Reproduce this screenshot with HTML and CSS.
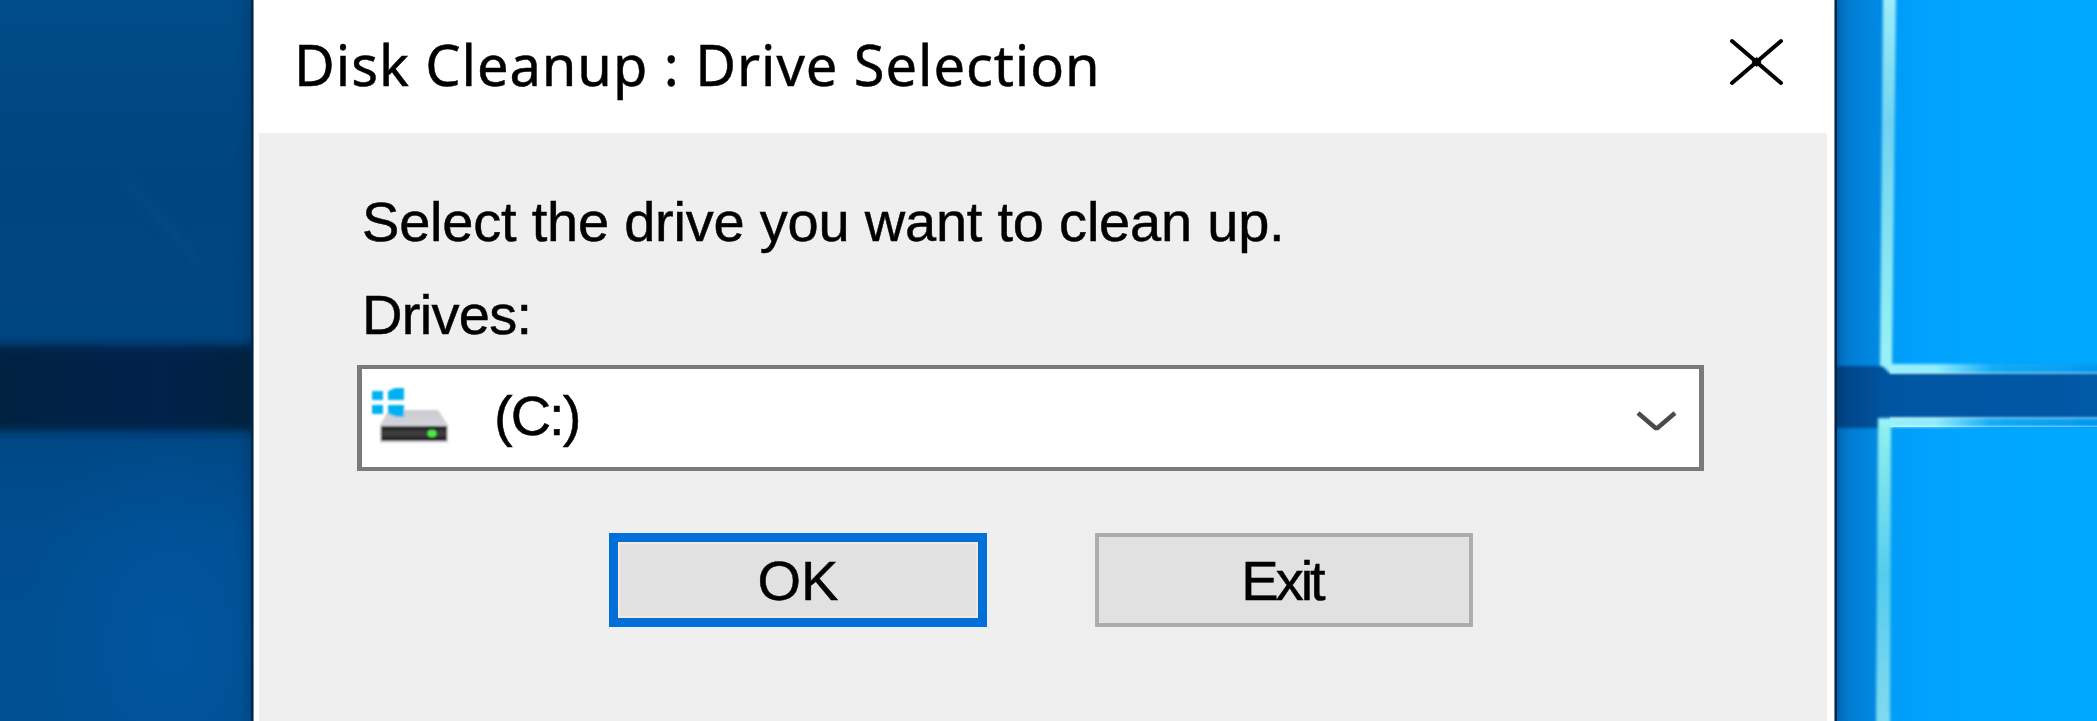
FILE: index.html
```html
<!DOCTYPE html>
<html lang="en">
<head>
<meta charset="utf-8">
<title>Disk Cleanup : Drive Selection</title>
<link rel="stylesheet" href="styles.css">
</head>
<body>
<svg class="wallpaper" viewBox="0 0 2097 721" aria-hidden="true">
  <defs>
    <linearGradient id="paneTop" x1="0" y1="0" x2="0" y2="1"><stop offset="0" stop-color="#004c89"/><stop offset=".45" stop-color="#00457f"/><stop offset="1" stop-color="#004681"/></linearGradient>
    <linearGradient id="paneLow" x1="0" y1="0" x2="0" y2="1"><stop offset="0" stop-color="#004580"/><stop offset=".45" stop-color="#004e90"/><stop offset="1" stop-color="#005091"/></linearGradient>
    <linearGradient id="bar" x1="0" x2="1"><stop offset="0" stop-color="#001f40"/><stop offset=".6" stop-color="#00244b"/><stop offset="1" stop-color="#001f3c"/></linearGradient>
    <radialGradient id="glow"><stop offset="0" stop-color="#00559f"/><stop offset="1" stop-color="#00559f" stop-opacity="0"/></radialGradient>
    <linearGradient id="edge" x1="0" x2="1"><stop offset="0" stop-color="#0074c6"/><stop offset=".75" stop-color="#0088e2"/><stop offset="1" stop-color="#008ae4"/></linearGradient>
    <linearGradient id="gap" x1="0" x2="1"><stop offset="0" stop-color="#00407d"/><stop offset=".22" stop-color="#0055a2"/><stop offset="1" stop-color="#005aa6"/></linearGradient>
    <linearGradient id="pane" x1="0" x2="1"><stop offset="0" stop-color="#009bf6"/><stop offset=".25" stop-color="#00a4ff"/><stop offset="1" stop-color="#00aaff"/></linearGradient>
    <linearGradient id="rim" x1="0" x2="1"><stop offset="0" stop-color="#99f1fb"/><stop offset=".24" stop-color="#8fedfc"/><stop offset=".48" stop-color="#13abf5"/><stop offset="1" stop-color="#0095ed"/></linearGradient>
    <linearGradient id="beamTop" x1="0" y1="0" x2="0" y2="1"><stop offset="0" stop-color="#a0edf7"/><stop offset=".35" stop-color="#70d4f1"/><stop offset="1" stop-color="#99f3f4"/></linearGradient>
    <linearGradient id="beamLow" x1="0" y1="0" x2="0" y2="1"><stop offset="0" stop-color="#91f0ed"/><stop offset=".5" stop-color="#55cced"/><stop offset="1" stop-color="#83dbef"/></linearGradient>
    <filter id="soft" x="-20%" y="-20%" width="140%" height="140%"><feGaussianBlur stdDeviation="1.6"/></filter>
    <filter id="softBar" x="-20%" y="-20%" width="140%" height="140%"><feGaussianBlur stdDeviation="5"/></filter>
  </defs>
  <rect width="260" height="390" fill="url(#paneTop)"/>
  <rect y="390" width="260" height="331" fill="url(#paneLow)"/>
  <ellipse cx="170" cy="640" rx="150" ry="210" fill="url(#glow)"/>
  <path d="M125 178 155 212 200 264" fill="none" stroke="#0a5795" stroke-width="9" opacity=".25" filter="url(#softBar)"/>
  <rect x="-20" y="345" width="300" height="86" fill="url(#bar)" filter="url(#softBar)"/>
  <rect x="1830" width="60" height="721" fill="url(#edge)"/>
  <path d="M1888 -5H2110V366H1885Z" fill="url(#pane)"/>
  <path d="M1885 427H2110V730H1881Z" fill="url(#pane)"/>
  <path d="M1825 366H1888V373H2115V418H1888V428H1825Z" fill="url(#gap)" filter="url(#soft)"/>
  <g filter="url(#soft)">
    <path d="M1883 -5H1896L1892 366H1880Z" fill="url(#beamTop)"/>
    <path d="M1880 364H2115V373H1890Z" fill="url(#rim)"/>
    <path d="M1878 422 1891 426 1890 730H1876Z" fill="url(#beamLow)"/>
    <path d="M1878 418H2115V427H1878Z" fill="url(#rim)"/>
  </g>
</svg>
<main class="dialog">
  <header class="titlebar">
    <h1 class="title">Disk Cleanup : Drive Selection</h1>
    <button class="close" aria-label="Close">
      <svg viewBox="0 0 56 48"><path d="M3 3 52 45M52 3 3 45" stroke="#000" stroke-width="4" stroke-linecap="round"/><path d="M27.500 19 32.500 24 27.500 29 22.500 24Z"/></svg>
    </button>
  </header>
  <section class="content">
    <p class="prompt">Select the drive you want to clean up.</p>
    <p class="label">Drives:</p>
    <div class="combo" role="combobox" aria-label="Drives" aria-expanded="false">
      <svg class="drive-icon" viewBox="0 0 80 60">
        <defs>
          <linearGradient id="lid" x1="0" y1="0" x2="0" y2="1"><stop offset="0" stop-color="#c9cbd1"/><stop offset="1" stop-color="#e0e1e6"/></linearGradient>
          <linearGradient id="front" x1="0" y1="0" x2="0" y2="1"><stop offset="0" stop-color="#1d1d1d"/><stop offset=".5" stop-color="#424242"/><stop offset="1" stop-color="#161616"/></linearGradient>
          <filter id="iconSoft"><feGaussianBlur stdDeviation="1"/></filter>
        </defs>
        <g filter="url(#iconSoft)">
          <path d="M18 23H67L77 38V56H9V38Z" fill="url(#lid)"/>
          <rect x="10" y="39" width="66" height="15" fill="url(#front)"/>
          <ellipse cx="61" cy="46.500" rx="4.500" ry="3.500" fill="#48ef46"/>
          <path d="M2 5H11V12H2ZM18 5 24 2H32V12H18ZM2 19H11V26H2ZM18 19H32V29H26L18 26Z" fill="#00b1f2" stroke="#00b1f2" stroke-width="2"/>
        </g>
      </svg>
      <span class="value">(C:)</span>
      <svg class="chevron" viewBox="0 0 44 24"><path d="M3 3 20.500 18H22.500L40 3" fill="none" stroke="#4a4a4a" stroke-width="4.500"/></svg>
    </div>
    <div class="actions">
      <button class="button primary"><span>OK</span></button>
      <button class="button"><span class="exit">Exit</span></button>
    </div>
  </section>
</main>
</body>
</html>
```

FILE: styles.css
```css
* { box-sizing: border-box; }
body {
  margin: 0;
  width: 2097px;
  height: 721px;
  overflow: hidden;
  font-family: "Liberation Sans", Arial, sans-serif;
  font-size: 56px;
  color: #000;
  -webkit-text-stroke: .5px #000;
}
.wallpaper { position: absolute; inset: 0; width: 2097px; height: 721px; }
.dialog {
  position: relative;
  width: 1580px;
  height: 721px;
  margin-left: 254px;
  background: #fff;
  box-shadow: 0 0 0 1px #728497, 0 0 0 3px #00274a, 0 0 12px 4px rgba(0, 35, 70, .4);
}
.titlebar {
  display: flex;
  justify-content: space-between;
  align-items: flex-start;
  height: 133px;
  padding: 0 49px 0 40px;
}
.title {
  margin: 26px 0 0;
  font: 400 56px/76px "Noto Sans", "Open Sans", sans-serif;
  white-space: nowrap;
  letter-spacing: .93px;
}
.close { width: 56px; height: 48px; margin-top: 38px; padding: 0; border: 0; background: none; }
.close svg { display: block; }
.content {
  height: 588px;
  margin: 0 7px 0 5px;
  padding: 57px 0 0 98px;
  background: #efefef;
}
.prompt, .label { margin: 0; padding-left: 5px; line-height: 64px; white-space: nowrap; }
.prompt { letter-spacing: -.22px; }
.label { margin-top: 29px; letter-spacing: -.7px; }
.combo {
  display: flex;
  align-items: center;
  width: 1347px;
  height: 106px;
  margin-top: 18px;
  padding: 0 20px 0 9px;
  border: solid #7a7a7a;
  border-width: 4px 5px;
  background: #fff;
}
.drive-icon { width: 80px; height: 60px; margin-top: -2px; }
.value { margin: -4px auto 0 43px; line-height: 64px; letter-spacing: -2px; }
.chevron { width: 44px; height: 24px; margin-top: 7px; }
.actions { display: flex; gap: 108px; margin: 62px 0 0 252px; }
.button {
  width: 378px;
  height: 94px;
  padding: 0;
  border: 4px solid #adadad;
  background: #e1e1e1;
  font: inherit;
  color: inherit;
}
.primary { border: 9px solid #006fd9; box-shadow: inset 0 0 0 2px #f5e8df; }
.exit { margin-right: 4px; letter-spacing: -3px; }
```
